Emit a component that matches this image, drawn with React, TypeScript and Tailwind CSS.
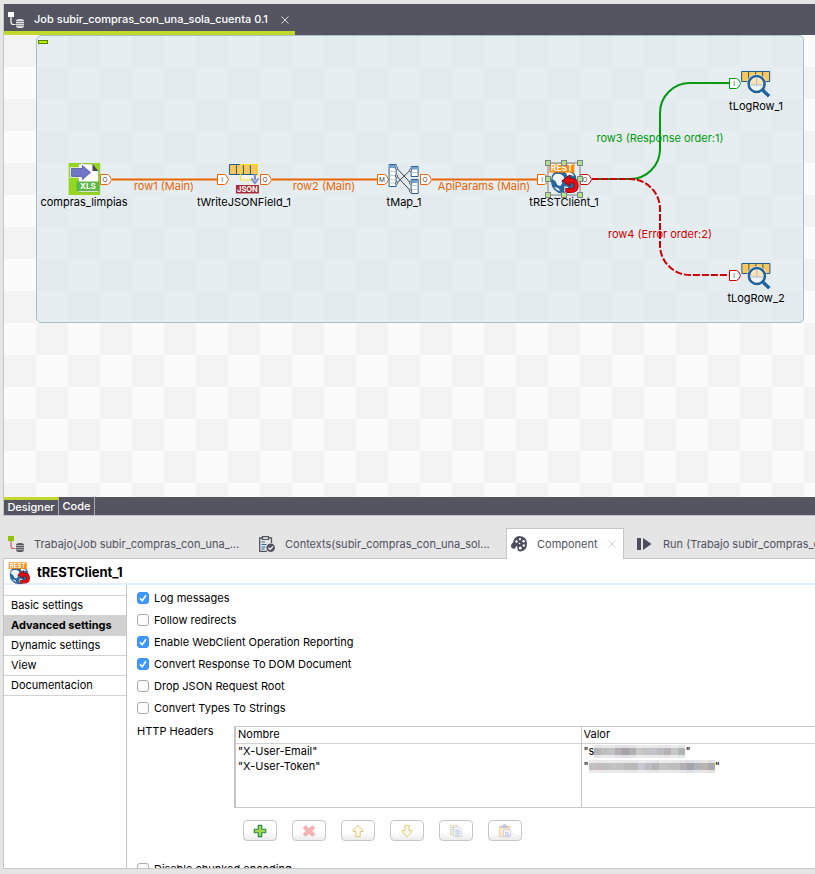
import React, { useState } from "react"
import clsx from "clsx"

const ORANGE = "#e86500"
const GREEN = "#009a0c"
const RED = "#cc0000"

/* ---------- icons ---------- */

const JobIcon: React.FC<{ square: string; line: string; disk: string; gap: string }> = ({
  square,
  line,
  disk,
  gap,
}) => (
  <svg className="size-4 shrink-0" viewBox="0 0 16 16">
    <path d="M3 4v6q0 2.5 2.500 2.500H7.500" fill="none" stroke={line} strokeWidth="1.200" />
    <rect width="6" height="5" fill={square} />
    <path d="M8 9q0-2 4-2t4 2v5q0 2-4 2t-4-2z" fill={disk} />
    <path d="M8 9.500h8M8 11.600h8M8 13.700h8" stroke={gap} strokeWidth="0.700" />
  </svg>
)

const XlsIcon = () => (
  <svg className="size-8" viewBox="0 0 32 32">
    <rect width="32" height="32" fill="#95d61f" />
    <path d="M10 1h14l6 7v21H10z" fill="#fff" stroke="#8a9a7a" strokeWidth="0.600" />
    <path d="M24 1l6 7h-6z" fill="#4a4a4a" />
    <path
      d="M2.500 5h11V1.500L23 9.500l-9.500 8V14h-11z"
      fill="#7077c6"
      stroke="#f4f4ff"
      strokeWidth="1.600"
    />
    <path d="M3 5.500h11V2.600l8 6.900-8 6.900v-3H3z" fill="#7077c6" stroke="#4c4f97" strokeWidth="0.700" />
    <rect x="8" y="18.500" width="23" height="9.500" fill="#5cb947" />
    <text x="19.500" y="26.300" textAnchor="middle" fontSize="8" fontWeight="700" fill="#fff">
      XLS
    </text>
  </svg>
)

const JsonIcon = () => (
  <svg className="size-8" viewBox="0 0 32 32">
    <path d="M12 11h17v6H12z" fill="#f4f5f3" />
    <path d="M1.500 1.500h28v10h-28z" fill="#fbc75c" stroke="#1d5c93" />
    <path d="M8.500 1.500v10M15.500 1.500v10M22.500 1.500v10" stroke="#1d5c93" />
    <path d="M25 17H14q-1.500 0-1.500-1.500v-14h17V13" fill="none" stroke="#f7df16" strokeWidth="1.200" />
    <path d="M27 11v6" stroke="#8389d2" strokeWidth="2.200" />
    <path d="M23.500 15.500L27 20l3.500-4.500" fill="none" stroke="#8389d2" strokeWidth="2" />
    <rect x="8" y="22" width="23" height="8.500" fill="#a82d34" />
    <text x="19.500" y="29.200" textAnchor="middle" fontSize="7.500" fontWeight="700" fill="#fff">
      JSON
    </text>
  </svg>
)

const MapIcon = () => (
  <svg className="size-8" viewBox="0 0 32 32">
    <g fill="#fff" stroke="#2a6290">
      <path d="M1.500 1.500h7v22h-7zM23.500 3.500h7v10h-7zM23.500 16.500h7v14h-7z" />
    </g>
    <path d="M2 2h6v3H2zM24 4h6v2.500h-6zM24 17h6v3h-6z" fill="#6ea3cf" />
    <path
      d="M2 8.500h6M2 12.500h6M2 16.500h6M2 20h6M24 9.500h6M24 22.500h6M24 26.500h6"
      stroke="#a9c2d8"
      strokeWidth="0.800"
    />
    <path d="M9 5L23 20M9 13l14 15M9 20L23 7" stroke="#3c4248" strokeWidth="1" />
    <g fill="#fff" stroke="#3c4248" strokeWidth="0.800">
      <circle cx="9" cy="5" r="1.200" />
      <circle cx="9" cy="13" r="1.200" />
      <circle cx="9" cy="20" r="1.200" />
      <circle cx="23" cy="7" r="1.200" />
      <circle cx="23" cy="20" r="1.200" />
      <circle cx="23" cy="28" r="1.200" />
    </g>
  </svg>
)

const RestIcon: React.FC<{ className?: string }> = ({ className = "size-8" }) => (
  <svg className={className} viewBox="0 0 32 32">
    <circle cx="15.500" cy="18" r="13.500" fill="#2a6699" stroke="#f6fafc" />
    <path
      d="M7 11h5l3 2 1 3-3 2 1 2-2 3-3-1-2-4-3-2q0-3 3-5zM17 9q6-1 9 4l-4-1-3 1z"
      fill="#eef4f8"
    />
    <path d="M6 24l4 1 2 3q-4 0-6-4zM16 23l4 1-1 4-3 1z" fill="#dbe7f0" />
    <rect x="1" y="0.500" width="25" height="9" fill="#fa8b0c" />
    <text
      x="13.500"
      y="8.200"
      textAnchor="middle"
      fontSize="8.500"
      fontWeight="700"
      fill="#fff"
    >
      REST
    </text>
    <g fill="none" strokeLinejoin="round">
      <path d="M20 17.500h2.500q5.500 0 5.500 5t-5.500 5H17" stroke="#8f0508" strokeWidth="4.800" />
      <path d="M14 17.500l7.500-5.500v11z" fill="#e30d13" stroke="#8f0508" strokeWidth="0.900" />
      <path d="M19 17.500h3.500q5.500 0 5.500 5t-5.500 5H17.500" stroke="#e30d13" strokeWidth="3.600" />
    </g>
  </svg>
)

const LogIcon = () => (
  <svg className="size-8" viewBox="0 0 32 32">
    <path d="M1.500 4.500h28v10h-28z" fill="#fbc75c" stroke="#1d5c93" />
    <path d="M8.500 4.500v10M15.500 4.500v10M22.500 4.500v10" stroke="#1d5c93" />
    <path d="M23 23.500l6.500 6" stroke="#fff" strokeWidth="5" opacity="0.700" />
    <circle cx="16.500" cy="17" r="10" fill="#fff" opacity="0.700" />
    <circle cx="16.500" cy="17" r="8" fill="#f1f4f4" stroke="#22649e" strokeWidth="2.600" />
    <path d="M10.500 18q-.5-7 6-7t6 7z" fill="#fbe3b4" />
    <path d="M16.500 11v7M10.500 18h12" stroke="#a9bccb" />
    <path d="M22.500 23l6.500 6.200" stroke="#22649e" strokeWidth="3.600" />
  </svg>
)

const ContextsIcon = () => (
  <svg className="h-4 w-4 shrink-0" viewBox="0 0 16 16">
    <path d="M12.500 7V2H.7v13.300H8" fill="none" stroke="#555562" strokeWidth="1.300" />
    <path d="M3.500.6h6v2.900h-6z" fill="#e5e5e5" stroke="#555562" strokeWidth="1.200" />
    <path d="M2.500 6h3.500M2.500 8.500h5M2.500 11h4M2.500 13h3" stroke="#2c6f9f" strokeWidth="1.100" />
    <circle cx="11.700" cy="11.700" r="4.300" fill="#555562" />
    <path d="M9.500 11.700l1.700 1.700 2.800-3" fill="none" stroke="#fff" strokeWidth="1.300" />
  </svg>
)

const PaletteIcon = () => (
  <svg className="size-4 shrink-0" viewBox="0 0 16 16">
    <path
      d="M8.500 0Q16 .5 16 7.500 16 15 9.500 15.500q-3 0-3-2.500 0-2.300-1-3-1 .3-1 2-.3 1-2 .8Q-.3 12 0 9.500q.3-2.200 2-3Q3.200.3 8.500 0z"
      fill="#4d4e5c"
    />
    <g fill="#fff">
      <circle cx="5.500" cy="5.500" r="1.200" />
      <circle cx="9" cy="3.200" r="1.100" />
      <circle cx="12.600" cy="5.200" r="1.300" />
      <circle cx="12.800" cy="9.500" r="1.200" />
      <circle cx="9.300" cy="12" r="1.500" />
      <circle cx="8.500" cy="7.500" r="0.800" />
    </g>
  </svg>
)

const RunIcon = () => (
  <svg className="size-4 shrink-0" viewBox="0 0 16 16">
    <path d="M0 2h4v12H0zM6 2l8.500 6L6 14z" fill="#4d4e5c" />
  </svg>
)

const CloseIcon: React.FC<{ color: string }> = ({ color }) => (
  <svg className="size-2" viewBox="0 0 8 8">
    <path d="M.5.5l7 7M7.500.5l-7 7" stroke={color} />
  </svg>
)

/* ---------- designer canvas ---------- */

const nodes = [
  { label: "compras_limpias", x: 80, y: 128, icon: <XlsIcon /> },
  { label: "tWriteJSONField_1", x: 240, y: 128, icon: <JsonIcon /> },
  { label: "tMap_1", x: 400, y: 128, icon: <MapIcon /> },
  { label: "tRESTClient_1", x: 560, y: 128, icon: <RestIcon /> },
  { label: "tLogRow_1", x: 752, y: 32, icon: <LogIcon /> },
  { label: "tLogRow_2", x: 752, y: 224, icon: <LogIcon /> },
]

const ports = [
  { letter: "O", x: 96, y: 139, color: ORANGE },
  { letter: "I", x: 213, y: 139, color: ORANGE },
  { letter: "O", x: 256, y: 139, color: ORANGE },
  { letter: "M", x: 373, y: 139, color: ORANGE },
  { letter: "O", x: 416, y: 139, color: ORANGE },
  { letter: "I", x: 533, y: 139, color: ORANGE },
  { letter: "O", x: 576, y: 139, color: RED },
  { letter: "I", x: 725, y: 43, color: GREEN },
  { letter: "I", x: 725, y: 235, color: RED },
]

const links = [
  { label: "row1 (Main)", x: 160, y: 144, color: "text-[#e86500]" },
  { label: "row2 (Main)", x: 320, y: 144, color: "text-[#e86500]" },
  { label: "ApiParams (Main)", x: 480, y: 144, color: "text-[#e86500]" },
  { label: "row3 (Response order:1)", x: 656, y: 96, color: "text-[#009a0c]" },
  { label: "row4 (Error order:2)", x: 656, y: 192, color: "text-[#cc0000]" },
]

const handles = [
  [544, 128],
  [560, 128],
  [576, 128],
  [544, 144],
  [576, 144],
  [544, 160],
  [560, 160],
  [576, 160],
]

const Canvas = () => (
  <main className="relative min-h-[300px] flex-1 overflow-hidden bg-[conic-gradient(#fbfbfb_25%,#f3f3f3_0_50%,#fbfbfb_0_75%,#f3f3f3_0)] bg-size-[64px_64px]">
    <div className="absolute top-0 left-8 h-72 w-[768px] rounded-[5px] border border-[#a6bfcb] bg-[#dbe7ec]/65">
      <div className="mt-1 ml-px h-1 w-2.5 border border-[#588000] bg-[#b5f000]" />
    </div>

    <svg className="absolute top-0 left-0" width="811" height="462" viewBox="0 0 811 462">
      <g fill="none" strokeWidth="2">
        <path d="M108 144.500H213M268 144.500H373M428 144.500H533" stroke={ORANGE} />
        <path d="M588 144H626A30 30 0 0 0 656 114V78A30 30 0 0 1 686 48H725" stroke={GREEN} />
        <path
          d="M588 144H626A30 30 0 0 1 656 174V210A30 30 0 0 0 686 240H725"
          stroke={RED}
          strokeDasharray="7 2"
        />
      </g>
      {ports.map((port) => (
        <g key={`${port.x}-${port.y}`}>
          <path
            d={`M${port.x + 0.5} ${port.y + 0.5}h7q2 0 4 5q-2 5-4 5h-7z`}
            fill="#fff"
            stroke={port.color}
          />
          <text x={port.x + 5} y={port.y + 8} textAnchor="middle" fontSize="6.500" fill="#444">
            {port.letter}
          </text>
        </g>
      ))}
    </svg>

    {links.map((link) => (
      <span
        key={link.label}
        className={clsx("absolute -translate-x-1/2 text-[11px] leading-[14px] whitespace-nowrap", link.color)}
        style={{ left: link.x, top: link.y }}
      >
        {link.label}
      </span>
    ))}

    {nodes.map((node) => (
      <div
        key={node.label}
        className="absolute flex -translate-x-1/2 flex-col items-center"
        style={{ left: node.x, top: node.y }}
      >
        {node.icon}
        <span className="text-[11px] leading-[14px]">{node.label}</span>
      </div>
    ))}

    <svg className="absolute top-0 left-0" width="811" height="200" viewBox="0 0 811 200">
      <rect x="544" y="128" width="32" height="32" fill="none" stroke="#7d8488" />
      {handles.map(([x, y]) => (
        <rect
          key={`${x}-${y}`}
          x={x - 2.5}
          y={y - 2.5}
          width="5"
          height="5"
          fill="#b3e08f"
          stroke="#7d8488"
        />
      ))}
    </svg>
  </main>
)

/* ---------- component settings ---------- */

const sections = ["Basic settings", "Advanced settings", "Dynamic settings", "View", "Documentacion"]

const options = [
  { label: "Log messages", checked: true },
  { label: "Follow redirects", checked: false },
  { label: "Enable WebClient Operation Reporting", checked: true },
  { label: "Convert Response To DOM Document", checked: true },
  { label: "Drop JSON Request Root", checked: false },
  { label: "Convert Types To Strings", checked: false },
]

interface ICheck {
  label: string
  checked: boolean
}

const Check: React.FC<ICheck> = ({ label, checked }) => (
  <label className="flex h-[22px] items-center gap-[5px]">
    <span className="grid size-3">
      <input
        type="checkbox"
        defaultChecked={checked}
        className="peer col-start-1 row-start-1 size-3 appearance-none rounded-[3px] border border-[#a9a9a9] bg-white checked:border-[#3b8ff5] checked:bg-[#3b99fc]"
      />
      <svg
        className="pointer-events-none invisible col-start-1 row-start-1 size-3 peer-checked:visible"
        viewBox="0 0 12 12"
      >
        <path d="M3 6.300l2.200 2.500L9 3.300" fill="none" stroke="#fff" strokeWidth="1.600" />
      </svg>
    </span>
    {label}
  </label>
)

const emailShades = ["#b5b5b5", "#bcc0c0", "#c2c2c2", "#b2aeb2", "#a6a2a8", "#b0b0b2", "#c8c8c8", "#bfc3c6", "#c3c3cb", "#bcbcc0", "#b6b2b6", "#c4c8c6", "#b0b6b6"]
const tokenShades = ["#c2c2c2", "#c4bcc0", "#bcc0c0", "#c2c2c2", "#c0c0c0", "#bcbcbc", "#bababa", "#c8c8d4", "#bcbcc2", "#b4b4b4", "#c2c2c2", "#bfbfbf", "#bcbcbc", "#b2aeb4", "#a3a5aa", "#b0b4b8", "#bcb4b0", "#a8aaaa"]

const Redacted: React.FC<{ shades: string[] }> = ({ shades }) => (
  <svg className="inline-block align-middle" width={shades.length * 7} height="13">
    {shades.map((shade, i) => (
      <g key={i} fill={shade}>
        <rect x={i * 7} width="7" height="13" opacity="0.350" />
        <rect x={i * 7} y="3" width="7" height="7" />
      </g>
    ))}
  </svg>
)

const tools = [
  {
    name: "Add",
    icon: <path d="M6 1.500h4V6h4.500v4H10v4.500H6V10H1.500V6H6z" fill="#a3d84a" stroke="#23894b" strokeWidth="1.300" />,
  },
  {
    name: "Remove",
    icon: (
      <path
        d="M4 2l4 3.500L12 2l2.500 2.500L11 8l3.500 3.500L12 14l-4-3.500L4 14l-2.500-2.500L5 8 1.500 4.500z"
        fill="#f6b4b4"
        stroke="#eba0a0"
      />
    ),
  },
  {
    name: "Move up",
    icon: <path d="M8 1.500l5.500 5.500V8.500H10.500v6h-5v-6H2.500V7z" fill="#fffbe8" stroke="#d9b968" />,
  },
  {
    name: "Move down",
    icon: <path d="M8 14.500L2.500 9V7.500h3v-6h5v6h3V9z" fill="#fffbe8" stroke="#d9b968" />,
  },
  {
    name: "Copy",
    icon: (
      <>
        <path d="M1.500 1.500h8v11h-8z" fill="#faf6ea" stroke="#ddd3b8" />
        <path d="M3 4h3M3 6h2M3 8h2M3 10h2" stroke="#bfc9e0" />
        <path d="M5.500 3.500h6l3 3v8h-9z" fill="#fafbff" stroke="#d6d3c6" />
        <path d="M7 7h5M7 9h6M7 11h6M7 13h5" stroke="#aebcdc" />
      </>
    ),
  },
  {
    name: "Paste",
    icon: (
      <>
        <path d="M1.500 2.500h12v12h-12z" fill="#fbe9cd" stroke="#e3c9a3" />
        <path d="M4 4q0-2 2-2 0-1.500 1.500-1.500T9 2q2 0 2 2z" fill="#c5cce0" stroke="#b6bdd3" />
        <path d="M6.500 6.500h6l2 2v6h-8z" fill="#fafbff" stroke="#c3c9da" />
        <path d="M8 9.500h4M8 11.500h5M8 13h5" stroke="#aebcdc" />
      </>
    ),
  },
]

const HeadersTable = () => (
  <div className="flex-1">
    <div className="h-[82px] overflow-hidden border-y border-l-2 border-y-[#c8c8c8] border-l-[#c4c4c4]">
      <table className="h-full w-full table-fixed border-collapse text-left">
        <thead>
          <tr className="h-4 border-b border-[#d2d2d2] leading-[15px]">
            <th className="w-[345px] border-r border-[#c8c8c8] pl-0.5 font-normal">Nombre</th>
            <th className="pl-0.5 font-normal">Valor</th>
          </tr>
        </thead>
        <tbody>
          <tr className="h-[15px] leading-[15px]">
            <td className="border-r border-[#c8c8c8] pl-0.5">"X-User-Email"</td>
            <td className="pl-0.5">
              <div className="flex h-[15px] items-center">
                "s
                <Redacted shades={emailShades} />"
              </div>
            </td>
          </tr>
          <tr className="h-[15px] leading-[15px]">
            <td className="border-r border-[#c8c8c8] pl-0.5">"X-User-Token"</td>
            <td className="pl-0.5">
              <div className="flex h-[15px] items-center">
                "
                <Redacted shades={tokenShades} />"
              </div>
            </td>
          </tr>
          <tr>
            <td className="border-r border-[#c8c8c8]" />
            <td />
          </tr>
        </tbody>
      </table>
    </div>
    <div className="mt-3 ml-[9px] flex gap-[15px]">
      {tools.map((tool) => (
        <button
          key={tool.name}
          type="button"
          aria-label={tool.name}
          className="flex h-[21px] w-[34px] items-center justify-center rounded-[4px] border border-[#c6c6c6] bg-linear-to-b from-white from-60% to-[#ececec]"
        >
          <svg className="size-3.5" viewBox="0 0 16 16">
            {tool.icon}
          </svg>
        </button>
      ))}
    </div>
  </div>
)

const Settings = () => {
  const [section, setSection] = useState<string>("Advanced settings")

  return (
    <div className="flex h-[283px] overflow-hidden">
      <nav className="w-[123px] shrink-0 border-r border-[#c4c4c4] pt-2.5">
        <ul className="border-t border-[#d2d2d2]">
          {sections.map((name) => (
            <li key={name} className="border-b border-[#d2d2d2]">
              <button
                type="button"
                onClick={() => setSection(name)}
                className={clsx(
                  "block h-[19px] w-full pl-[7px] text-left leading-[19px]",
                  section === name && "bg-[#d1d1d1] font-bold"
                )}
              >
                {name}
              </button>
            </li>
          ))}
        </ul>
      </nav>
      <div className="min-w-0 flex-1 pt-0.5 pl-2.5">
        {options.map((option) => (
          <Check key={option.label} {...option} />
        ))}
        <div className="flex pt-[7px]">
          <span className="w-[97px] shrink-0 leading-[11px]">HTTP Headers</span>
          <HeadersTable />
        </div>
        <div className="mt-[17px]">
          <Check label="Disable chunked encoding" checked={false} />
        </div>
      </div>
    </div>
  )
}

/* ---------- page ---------- */

const App = () => (
  <div className="flex h-screen flex-col overflow-hidden bg-[#e5e5e5] pt-1 pb-[5px] pl-[3px] font-[Inter,sans-serif] text-[11px] text-black">
    <header className="flex h-[31px] shrink-0 border-l border-[#c6c6c6] bg-[#555562]">
      <div className="flex w-[291px] items-center border-b-4 border-[#c3d82c] pt-1 pl-1 font-medium text-white">
        <JobIcon square="#fff" line="#fff" disk="#e8e8ea" gap="#555562" />
        <span className="ml-2.5 flex-1 whitespace-nowrap">Job subir_compras_con_una_sola_cuenta 0.1</span>
        <button type="button" aria-label="Close" className="mr-1.5">
          <CloseIcon color="#d8d8dc" />
        </button>
      </div>
    </header>

    <div className="flex flex-1 flex-col border-l border-[#c6c6c6]">
      <Canvas />
    </div>

    <div className="flex h-[19px] shrink-0 border-b border-l border-[#c6c6c6] bg-[#555562] font-medium text-white">
      <button type="button" className="w-[55px] border-t-3 border-r border-t-[#c3d82c] border-r-[#a9a9b0] leading-[13px]">
        Designer
      </button>
      <button type="button" className="w-9 border-r border-[#a9a9b0]">
        Code
      </button>
    </div>

    <div className="mt-3 flex h-[31px] shrink-0 text-[#51525e]">
      <button type="button" className="flex w-[247px] shrink-0 items-center gap-2.5 border-b border-[#c6c6c6] pt-0.5 pl-[5px]">
        <JobIcon square="#8ec200" line="#d05a60" disk="#555562" gap="#d8d8d8" />
        Trabajo(Job subir_compras_con_una_...
      </button>
      <button type="button" className="flex w-64 shrink-0 items-center gap-2.5 border-b border-[#c6c6c6] pt-0.5 pl-[9px]">
        <ContextsIcon />
        Contexts(subir_compras_con_una_sol...
      </button>
      <div className="flex w-[118px] shrink-0 items-center gap-2.5 border-x border-t border-[#c6c6c6] bg-white pl-1">
        <PaletteIcon />
        <button type="button">Component</button>
        <CloseIcon color="#d6d6d6" />
      </div>
      <button
        type="button"
        className="flex flex-1 items-center gap-2.5 overflow-hidden border-b border-[#c6c6c6] pt-0.5 pl-[13px] whitespace-nowrap"
      >
        <RunIcon />
        Run (Trabajo subir_compras_con_una_sola_cuenta)
      </button>
    </div>

    <section className="shrink-0 border-b border-l border-[#c6c6c6] bg-white">
      <h1 className="flex h-[26px] items-center gap-1.5 border-b-2 border-[#e2effa] pt-1 pl-1 text-[13px] font-bold">
        <RestIcon className="size-[23px]" />
        tRESTClient_1
      </h1>
      <Settings />
    </section>
  </div>
)

export default App
